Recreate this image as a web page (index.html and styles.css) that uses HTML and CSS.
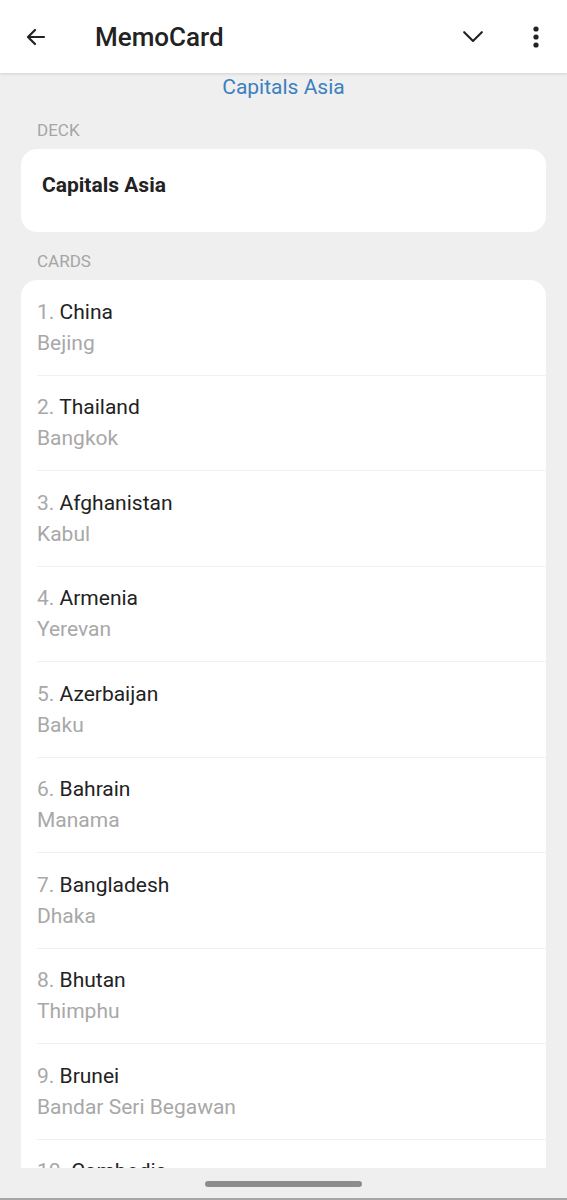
FILE: index.html
```html
<!DOCTYPE html>
<html lang="en">
<head>
    <meta charset="UTF-8">
    <meta name="viewport" content="width=device-width, initial-scale=1.0">
    <title>MemoCard</title>
    <link rel="stylesheet" href="styles.css">
</head>
<body>
    <header class="appbar">
        <button class="icon-btn back" aria-label="Back">
            <svg width="24" height="24" viewBox="0 0 24 24"><path d="M20 12H4.5M11 5l-7 7 7 7" fill="none" stroke="#222" stroke-width="2.2" stroke-linecap="round" stroke-linejoin="round"/></svg>
        </button>
        <h1 class="title">MemoCard</h1>
        <button class="icon-btn chevron" aria-label="Expand">
            <svg width="20" height="12" viewBox="0 0 20 12"><path d="M1.2 1.2l8.8 8.8 8.8-8.8" fill="none" stroke="#222" stroke-width="2.1" stroke-linecap="round" stroke-linejoin="round"/></svg>
        </button>
        <button class="icon-btn more" aria-label="More">
            <svg width="8" height="24" viewBox="0 0 8 24"><circle cx="4" cy="4" r="2.6" fill="#222"/><circle cx="4" cy="12" r="2.6" fill="#222"/><circle cx="4" cy="20" r="2.6" fill="#222"/></svg>
        </button>
    </header>

    <main class="content">
        <a class="deck-link" href="#">Capitals Asia</a>

        <p class="section-label">DECK</p>
        <div class="deck-card">Capitals Asia</div>

        <p class="section-label">CARDS</p>
        <ul class="card-list">
            <li class="card-row"><div class="row-inner"><div class="front"><span class="num">1.</span> China</div><div class="back-side">Bejing</div></div></li>
            <li class="card-row"><div class="row-inner"><div class="front"><span class="num">2.</span> Thailand</div><div class="back-side">Bangkok</div></div></li>
            <li class="card-row"><div class="row-inner"><div class="front"><span class="num">3.</span> Afghanistan</div><div class="back-side">Kabul</div></div></li>
            <li class="card-row"><div class="row-inner"><div class="front"><span class="num">4.</span> Armenia</div><div class="back-side">Yerevan</div></div></li>
            <li class="card-row"><div class="row-inner"><div class="front"><span class="num">5.</span> Azerbaijan</div><div class="back-side">Baku</div></div></li>
            <li class="card-row"><div class="row-inner"><div class="front"><span class="num">6.</span> Bahrain</div><div class="back-side">Manama</div></div></li>
            <li class="card-row"><div class="row-inner"><div class="front"><span class="num">7.</span> Bangladesh</div><div class="back-side">Dhaka</div></div></li>
            <li class="card-row"><div class="row-inner"><div class="front"><span class="num">8.</span> Bhutan</div><div class="back-side">Thimphu</div></div></li>
            <li class="card-row"><div class="row-inner"><div class="front"><span class="num">9.</span> Brunei</div><div class="back-side">Bandar Seri Begawan</div></div></li>
            <li class="card-row"><div class="row-inner"><div class="front"><span class="num">10.</span> Cambodia</div><div class="back-side">Phnom Penh</div></div></li>
        </ul>
    </main>

    <footer class="navbar">
        <div class="home-pill"></div>
    </footer>
</body>
</html>
```

FILE: styles.css
```css
body {
    display: flex;
    flex-direction: column;
    height: 1200px;
    margin: 0;
    background-color: #efefef;
    font-family: Roboto, "Noto Sans", sans-serif;
    overflow: hidden;
}
.appbar {
    display: flex;
    align-items: center;
    height: 73px;
    flex-shrink: 0;
    background: #fff;
    box-shadow: 0 1px 3px rgba(0, 0, 0, 0.12);
    position: relative;
    z-index: 1;
}
.icon-btn {
    display: flex;
    align-items: center;
    justify-content: center;
    border: none;
    background: none;
    padding: 0;
    cursor: pointer;
}
.back {
    margin-left: 24px;
    width: 24px;
    height: 24px;
}
.title {
    flex: 1;
    margin: 0 0 0 47px;
    font-size: 26px;
    font-weight: 500;
    color: #222;
}
.chevron {
    width: 20px;
    height: 24px;
    margin-right: 49px;
}
.more {
    width: 8px;
    height: 24px;
    margin-right: 27px;
}
.content {
    flex: 1;
    overflow: hidden;
    padding: 0 21px;
}
.deck-link {
    display: block;
    text-align: center;
    color: #3c7fbf;
    font-size: 21px;
    line-height: 28px;
    text-decoration: none;
}
.section-label {
    margin: 19px 0 9px 16px;
    font-size: 17px;
    line-height: 20px;
    color: #a5a5a5;
}
.deck-card {
    background: #fff;
    border-radius: 16px;
    height: 83px;
    box-sizing: border-box;
    padding: 22px 21px 0 21px;
    font-size: 21px;
    font-weight: bold;
    line-height: 28px;
    color: #222;
}
.card-list {
    list-style: none;
    margin: 0;
    padding: 0;
    background: #fff;
    border-radius: 16px 16px 0 0;
}
.card-row {
    padding-left: 16px;
}
.row-inner {
    padding: 16.5px 0 17px 0;
    border-bottom: 1px solid #f1f1f1;
}
.front {
    font-size: 21px;
    line-height: 30px;
    color: #222;
}
.num {
    color: #a8a8a8;
}
.back-side {
    margin-top: 1px;
    font-size: 21px;
    line-height: 30px;
    color: #a8a8a8;
}
.navbar {
    display: flex;
    justify-content: center;
    height: 32px;
    flex-shrink: 0;
    box-sizing: border-box;
    padding-top: 13px;
    background: #efefef;
    border-bottom: 2px solid #a6a6a6;
}
.home-pill {
    width: 157px;
    height: 6px;
    border-radius: 3px;
    background: #8c8c8c;
}
```
